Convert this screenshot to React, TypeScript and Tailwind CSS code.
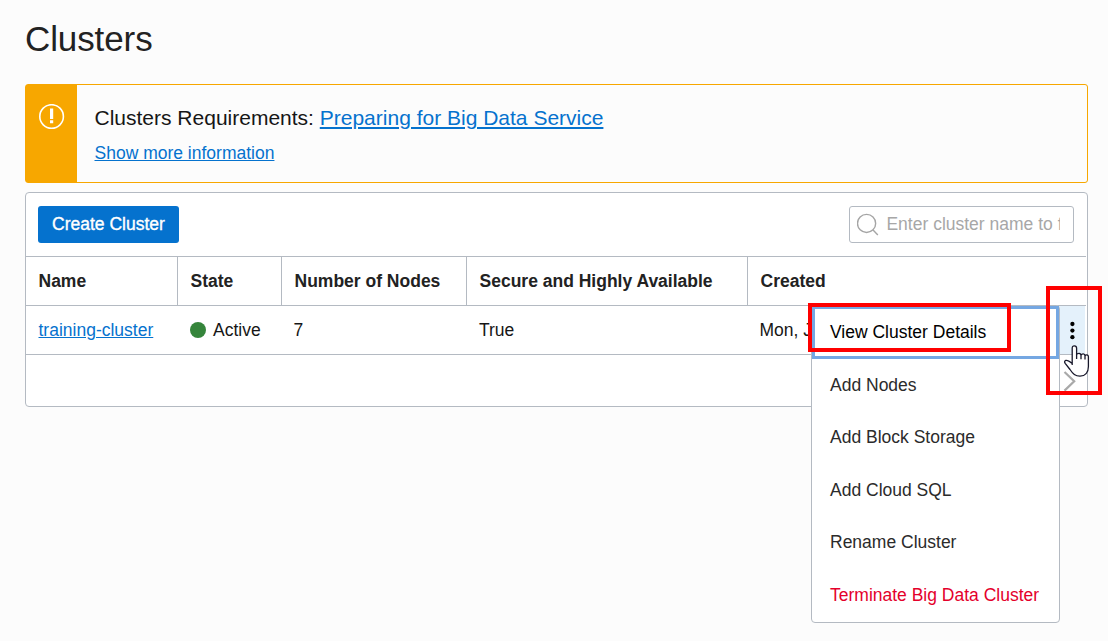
const headers = ['Name', 'State', 'Number of Nodes', 'Secure and Highly Available', 'Created'];

const actions = ['Add Nodes', 'Add Block Storage', 'Add Cloud SQL', 'Rename Cluster'];

const columns = 'grid grid-cols-[152px_104px_185px_281px_1fr] mr-px';

function WarningIcon() {
  return (
    <svg width="26" height="26" viewBox="0 0 26 26" fill="none">
      <circle cx="12.6" cy="12.5" r="11.8" stroke="#fff" strokeWidth="1.6" />
      <path d="M11 4.5h3.2v10.5h-3.2zM11 16.3h3.2v3h-3.2z" fill="#fff" />
    </svg>
  );
}

function SearchIcon() {
  return (
    <svg width="24" height="24" viewBox="0 0 24 24" fill="none" stroke="#a5a5a5" strokeWidth="1.4">
      <circle cx="9.6" cy="10.4" r="9.1" />
      <path d="M16.1 17l4.8 5" />
    </svg>
  );
}

function HandCursor() {
  return (
    <svg className="absolute left-[1064px] top-[345px]" width="26" height="33" viewBox="0 0 26 33">
      <path
        d="M8.2 22.2V3.2Q8.2 .8 10.4 .8T12.6 3.2V10Q13.2 8.3 15 8.3T17 10Q17.6 8.8 19.2 8.8T21 10.7Q21.5 9.6 23 9.9T24.4 12V21.5C24.4 27.5 21 31.2 16 31.2C11.2 31.2 9 29 6 24.5L1.2 18.3Q-.2 16.2 1.8 15.4Q3.7 14.8 8.2 18.4Z"
        fill="#fff"
      />
      <path
        d="M8.2 20V3.2Q8.2 .8 10.4 .8T12.6 3.2V14M12.6 9.6Q13 8.3 15 8.3T17 10.6V14.2M17 10.2Q17.6 8.8 19.2 8.8T21 10.8V14.6M21 11Q21.5 9.6 23 9.9T24.4 12V21.5C24.4 27.5 21 31.2 16 31.2C11.2 31.2 9 29 6 24.5L1.2 18.3Q-.2 16.2 1.8 15.4Q3.7 14.8 8.2 18.4"
        fill="none"
        stroke="#17172a"
        strokeWidth="1.3"
        strokeLinejoin="round"
      />
    </svg>
  );
}

function Banner() {
  return (
    <section className="flex h-[99px] rounded-[3px] border border-[#f7a700]">
      <div className="flex w-[51px] justify-center bg-[#f7a700] pt-[19px]">
        <WarningIcon />
      </div>
      <div className="pl-[17.5px] pt-[18px]">
        <h2 className="text-[21px] leading-[30px] text-[#161616]">
          Clusters Requirements:{' '}
          <a href="#" className="text-[#0572ce] underline">Preparing for Big Data Service</a>
        </h2>
        <a href="#" className="mt-[7px] block text-[17.5px] leading-[26px] text-[#0572ce] underline">
          Show more information
        </a>
      </div>
    </section>
  );
}

function ClusterTable() {
  return (
    <section className="mt-[9px] h-[215px] rounded-[4px] border border-[#b4bac2] bg-white">
      <div className="flex h-[63px] items-center justify-between pl-3 pr-[13px]">
        <button className="h-[37px] w-[141px] rounded-[3px] bg-[#0572ce] pb-0.5 text-[17.5px] text-white [-webkit-text-stroke:0.35px_white]">
          Create Cluster
        </button>
        <label className="flex h-[37px] w-[225px] items-center rounded-[3px] border border-[#b4bac2] pl-[7px] pr-[13px]">
          <SearchIcon />
          <span className="mb-0.5 ml-[5.5px] w-[174px] overflow-hidden whitespace-nowrap text-[17.5px] text-[#a7a7a7]">
            Enter cluster name to filter
          </span>
        </label>
      </div>
      <div className={columns + ' h-[50px] border-y border-[#b4bac2] font-bold'}>
        {headers.map((label) => (
          <div key={label} className="flex items-center border-r border-[#b4bac2] pl-[12.5px] last:border-r-0">
            {label}
          </div>
        ))}
      </div>
      <div className={columns + ' h-[49px] items-center border-b border-[#b4bac2] text-[#161616]'}>
        <a href="#" className="pl-[12.5px] text-[#0572ce] underline">training-cluster</a>
        <div className="flex items-center pl-3">
          <span className="mr-[7px] size-4 rounded-full bg-[#35853b]" />
          Active
        </div>
        <div className="pl-[11.5px]">7</div>
        <div className="pl-3">True</div>
        <div className="flex h-full items-center justify-between pl-[11.5px] pr-px">
          Mon, Jun
          <div className="flex h-full w-[26px] items-center justify-center bg-[#e4f1fb]">
            <svg width="6" height="20" viewBox="0 0 6 20" fill="#000">
              <circle cx="3.4" cy="4" r="2.15" />
              <circle cx="3.4" cy="10.6" r="2.15" />
              <circle cx="3.4" cy="17.2" r="2.15" />
            </svg>
          </div>
        </div>
      </div>
      <div className="flex h-[51px] items-center justify-end pr-[11px]">
        <svg width="13" height="22" viewBox="0 0 13 22" fill="none" stroke="#a9a9a9" strokeWidth="2.2">
          <path d="M1.5 2L11.2 11.3L1.5 20.6" />
        </svg>
      </div>
    </section>
  );
}

function ActionMenu() {
  return (
    <div className="absolute left-[811px] top-[305px] h-[318px] w-[249px] rounded-[4px] border border-[#b4bac2] bg-white text-[#2b2b2b]">
      <div className="flex h-[53px] items-center border-[3px] border-[#75a7e2] pb-px pl-[15px] text-black">
        View Cluster Details
      </div>
      {actions.map((label) => (
        <div key={label} className="flex h-[52.3px] items-center pl-[18px]">{label}</div>
      ))}
      <div className="flex h-[53.4px] items-center pl-[18px] text-[#e4002b]">Terminate Big Data Cluster</div>
    </div>
  );
}

export default function App() {
  return (
    <main className="relative h-[641px] w-[1108px] overflow-hidden bg-[#fcfcfc] px-[25px] pr-5 pt-[18px] font-['Liberation_Sans',Arial,sans-serif] text-[17.5px] leading-[26px] text-[#222]">
      <h1 className="h-[66px] text-[35px] leading-[42px] tracking-[-0.1px]">Clusters</h1>
      <Banner />
      <ClusterTable />
      <ActionMenu />
      <div className="absolute left-[808px] top-[303px] h-[49px] w-[203px] border-4 border-[#f00]" />
      <div className="absolute left-[1046px] top-[286px] h-[109px] w-[56px] border-4 border-[#f00]" />
      <HandCursor />
    </main>
  );
}
